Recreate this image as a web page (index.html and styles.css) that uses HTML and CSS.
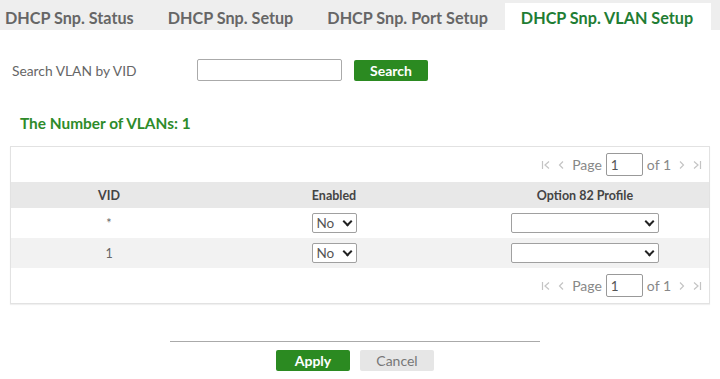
FILE: index.html
```html
<!doctype html>
<html>
<head>
<title>DHCP Snp. VLAN Setup</title>
<link rel="stylesheet" href="styles.css">
</head>
<body>

<div class="tab-bar">
<div class="tab tab-first">DHCP Snp. Status</div>
<div class="tab">DHCP Snp. Setup</div>
<div class="tab">DHCP Snp. Port Setup</div>
<div class="tab tab-active">DHCP Snp. VLAN Setup</div>
</div>

<div class="search-row">
<label class="search-label" for="vid">Search VLAN by VID</label>
<input class="search-input" id="vid" type="text">
<button class="btn btn-green btn-search">Search</button>
</div>

<div class="count-title">The Number of VLANs: 1</div>

<div class="panel">
<div class="pager">
<span class="pager-icon">
<svg width="10" height="10" viewBox="0 0 10 10"><path d="M1.5 1v8M8 1.5L4 5l4 3.5" fill="none" stroke="#c4c4c4" stroke-width="1.2"/></svg>
</span>
<span class="pager-icon">
<svg width="8" height="10" viewBox="0 0 8 10"><path d="M6 1.5L2.5 5 6 8.5" fill="none" stroke="#c4c4c4" stroke-width="1.2"/></svg>
</span>
<span class="pager-text">Page</span>
<input class="pager-input" type="text" value="1">
<span class="pager-text">of 1</span>
<span class="pager-icon">
<svg width="8" height="10" viewBox="0 0 8 10"><path d="M2 1.5L5.5 5 2 8.5" fill="none" stroke="#c4c4c4" stroke-width="1.2"/></svg>
</span>
<span class="pager-icon">
<svg width="10" height="10" viewBox="0 0 10 10"><path d="M8.5 1v8M2 1.5L6 5 2 8.5" fill="none" stroke="#c4c4c4" stroke-width="1.2"/></svg>
</span>
</div>

<div class="grid-row grid-head">
<div class="cell col-vid">VID</div>
<div class="cell col-enabled">Enabled</div>
<div class="cell col-profile">Option 82 Profile</div>
</div>

<div class="grid-row">
<div class="cell col-vid">*</div>
<div class="cell col-enabled">
<div class="select select-small">No <span class="chev"></span></div>
</div>
<div class="cell col-profile">
<div class="select select-wide"><span class="chev"></span></div>
</div>
</div>

<div class="grid-row grid-alt">
<div class="cell col-vid">1</div>
<div class="cell col-enabled">
<div class="select select-small">No <span class="chev"></span></div>
</div>
<div class="cell col-profile">
<div class="select select-wide"><span class="chev"></span></div>
</div>
</div>

<div class="pager">
<span class="pager-icon">
<svg width="10" height="10" viewBox="0 0 10 10"><path d="M1.5 1v8M8 1.5L4 5l4 3.5" fill="none" stroke="#c4c4c4" stroke-width="1.2"/></svg>
</span>
<span class="pager-icon">
<svg width="8" height="10" viewBox="0 0 8 10"><path d="M6 1.5L2.5 5 6 8.5" fill="none" stroke="#c4c4c4" stroke-width="1.2"/></svg>
</span>
<span class="pager-text">Page</span>
<input class="pager-input" type="text" value="1">
<span class="pager-text">of 1</span>
<span class="pager-icon">
<svg width="8" height="10" viewBox="0 0 8 10"><path d="M2 1.5L5.5 5 2 8.5" fill="none" stroke="#c4c4c4" stroke-width="1.2"/></svg>
</span>
<span class="pager-icon">
<svg width="10" height="10" viewBox="0 0 10 10"><path d="M8.5 1v8M2 1.5L6 5 2 8.5" fill="none" stroke="#c4c4c4" stroke-width="1.2"/></svg>
</span>
</div>
</div>

<div class="footer">
<div class="footer-line"></div>
<div class="footer-buttons">
<button class="btn btn-green btn-apply">Apply</button>
<button class="btn btn-gray btn-cancel">Cancel</button>
</div>
</div>

</body>
</html>
```

FILE: styles.css
```css
body {
	margin: 0;
	font-family: "Lato", "DejaVu Sans", sans-serif;
	color: #555555;
	background: #ffffff;
}

.tab-bar {
	display: flex;
	align-items: flex-end;
	height: 30px;
	background: #eeeeee;
}

.tab {
	height: 27px;
	line-height: 29px;
	padding: 0 17px;
	font-size: 16.2px;
	font-weight: bold;
	color: #666666;
	white-space: nowrap;
}

.tab-first {
	padding-left: 5px;
}

.tab-active {
	background: #ffffff;
	color: #1f7d34;
	padding: 0 18px 0 16px;
}

.search-row {
	display: flex;
	align-items: center;
	height: 22px;
	margin-top: 29px;
	padding-left: 12px;
}

.search-label {
	width: 185px;
	font-size: 13.8px;
	color: #666666;
}

.search-input {
	box-sizing: border-box;
	width: 145px;
	height: 22px;
	margin: 0;
	border: 1px solid #aaaaaa;
	border-radius: 2px;
}

.btn {
	box-sizing: border-box;
	height: 21px;
	border: 0;
	border-radius: 2px;
	padding: 0;
	font-family: "Lato", "DejaVu Sans", sans-serif;
	font-size: 14px;
	font-weight: bold;
	cursor: pointer;
}

.btn-green {
	background: #2b8a21;
	color: #ffffff;
}

.btn-gray {
	background: #e6e6e6;
	color: #777777;
	font-weight: normal;
}

.btn-search {
	width: 74px;
	margin-left: 12px;
}

.count-title {
	margin: 33px 0 0 20px;
	font-size: 15.4px;
	font-weight: bold;
	color: #2e8b2a;
	line-height: 18px;
}

.panel {
	margin: 14px 10px 0 10px;
	border: 1px solid #e2e2e2;
	box-shadow: 0 1px 1px rgba(0, 0, 0, 0.06);
}

.pager {
	display: flex;
	align-items: center;
	justify-content: flex-end;
	height: 35px;
	padding-right: 4px;
	font-size: 14px;
	color: #888888;
}

.pager-icon {
	display: flex;
	align-items: center;
	margin: 0 3px;
}

.pager-text {
	margin: 0 4px;
}

.pager-input {
	box-sizing: border-box;
	width: 37px;
	height: 23px;
	margin: 0;
	padding: 0 4px;
	border: 1px solid #999999;
	border-radius: 2px;
	font-family: "Lato", "DejaVu Sans", sans-serif;
	font-size: 13.5px;
	color: #555555;
}

.grid-row {
	display: flex;
	align-items: center;
	height: 30px;
	font-size: 12.5px;
	color: #666666;
}

.grid-head {
	height: 26px;
	background: #e8e8e8;
	font-weight: bold;
	color: #444444;
}

.grid-alt {
	background: #f2f2f2;
}

.cell {
	display: flex;
	justify-content: center;
}

.col-vid {
	width: 196px;
}

.col-enabled {
	width: 254px;
}

.col-profile {
	flex: 1;
}

.select {
	box-sizing: border-box;
	display: flex;
	align-items: center;
	justify-content: space-between;
	height: 20px;
	padding: 0 5px 0 4px;
	border: 1px solid #a0a0a0;
	border-radius: 2px;
	background: #ffffff;
	font-size: 13.5px;
	color: #555555;
}

.select-small {
	width: 45px;
}

.select-wide {
	width: 148px;
	justify-content: flex-end;
}

.chev {
	width: 5px;
	height: 5px;
	margin-top: -4px;
	border-right: 2px solid #222222;
	border-bottom: 2px solid #222222;
	transform: rotate(45deg);
}

.footer {
	display: flex;
	flex-direction: column;
	align-items: center;
	margin-top: 37px;
	padding-right: 10px;
}

.footer-line {
	width: 370px;
	border-top: 1px solid #aaaaaa;
}

.footer-buttons {
	display: flex;
	gap: 10px;
	margin-top: 8px;
}

.btn-apply,
.btn-cancel {
	width: 74px;
}
```
